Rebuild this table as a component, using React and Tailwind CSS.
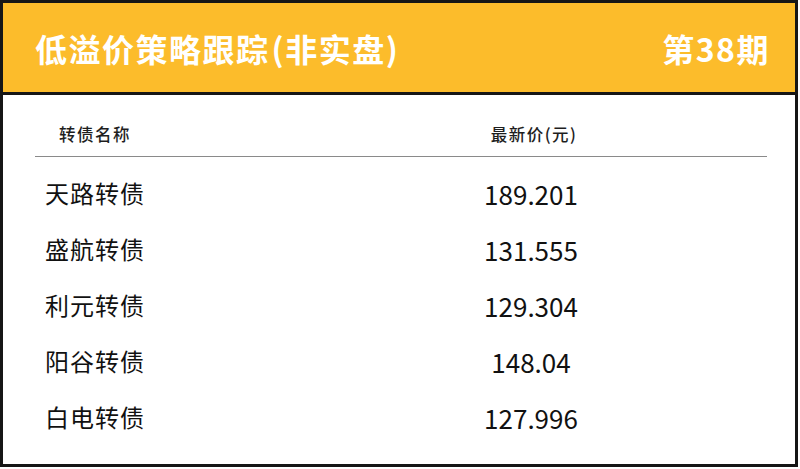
import React from 'react';

const ROWS = [
  { name: '天路转债', price: '189.201' },
  { name: '盛航转债', price: '131.555' },
  { name: '利元转债', price: '129.304' },
  { name: '阳谷转债', price: '148.04' },
  { name: '白电转债', price: '127.996' },
];

const FONT = "font-['Noto_Sans_CJK_SC','Noto_Sans',sans-serif]";

export default function App() {
  return (
    <div className={`w-[800px] h-[469px] bg-white ${FONT}`}>
      <div className="w-[798px] h-[467px] border-[3px] border-[#161616] flex flex-col">
        {/* Title bar */}
        <div className="h-[92px] shrink-0 bg-[#fcbc2b] border-b-[3px] border-[#161616] flex items-center justify-between pl-[32px] pr-[25px] text-white font-bold text-[32px] tracking-[1.5px] leading-none">
          <span>低溢价策略跟踪<span className="ml-[2px]">(</span>非实盘)</span>
          <span>第38期</span>
        </div>

        {/* Table */}
        <div className="pl-[32px] pr-[28px]">
          <div className="flex h-[62px] pt-[28px] border-b-[1.5px] border-[#8a8a8a] text-[16.5px] leading-[22px] tracking-[1.5px] font-medium text-[#1e1e1e]">
            <div className="w-[120px] text-center">转债名称</div>
            <div className="w-[120px] ml-[319px] text-center">最新价(元)</div>
          </div>
          <div className="pt-[8px]">
            {ROWS.map((r) => (
              <div key={r.name} className="flex items-center h-[56px] text-[#111]">
                <div className="w-[120px] text-center text-[24px] tracking-[1px]">{r.name}</div>
                <div className="w-[120px] ml-[316px] text-center text-[26px]">{r.price}</div>
              </div>
            ))}
          </div>
        </div>
      </div>
    </div>
  );
}
